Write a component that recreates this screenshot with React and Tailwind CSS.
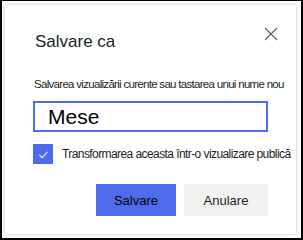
export default function App() {
  return (
    <div
      className="w-[303px] h-[240px] border-x-2 border-t border-b-2 border-black bg-white pt-[4px] pl-[3px] pr-[5px] pb-[4px]"
      style={{ fontFamily: '"Liberation Sans", Arial, sans-serif' }}
    >
      <div className="h-full bg-white shadow-[0_0_3px_rgba(0,0,0,0.25)] flex flex-col">
        <div className="flex items-start justify-between pl-[30px] pr-[18px]">
          <h2 className="mt-[27px] text-[17px] leading-[20px] text-[#201f1e]">Salvare ca</h2>
          <button className="mt-[22px] w-[14px] h-[14px] text-[#605e5c]">
            <svg viewBox="0 0 14 14" width="14" height="14" fill="none" stroke="currentColor" strokeWidth="1.1">
              <path d="M1 1L13 13M13 1L1 13" />
            </svg>
          </button>
        </div>

        <div className="px-[28px]">
          <p className="mt-[24px] pl-[1px] text-[11.5px] leading-[16px] tracking-[-0.7px] text-[#201f1e] whitespace-nowrap">
            Salvarea vizualizării curente sau tastarea unui nume nou
          </p>
          <div className="mt-[9px] h-[31px] border-2 border-[#4f6bed] flex items-center pl-[13px]">
            <span className="text-[21px] leading-none text-black">Mese</span>
          </div>
          <label className="mt-[12px] flex items-center gap-[9px]">
            <span className="shrink-0 w-[20px] h-[20px] bg-[#4f6bed] flex items-center justify-center">
              <svg viewBox="0 0 12 12" width="11" height="11" fill="none" stroke="white" strokeWidth="1.1">
                <path d="M1.5 6.5L4.5 9.5L10.5 3" />
              </svg>
            </span>
            <span className="text-[12px] leading-[16px] tracking-[-0.58px] text-[#201f1e] whitespace-nowrap">
              Transformarea aceasta într-o vizualizare publică
            </span>
          </label>

          <div className="mt-[20px] flex justify-end gap-[8px]">
            <button className="w-[80px] h-[32px] bg-[#4f6bed]">
              <span className="text-[13px] text-black">Salvare</span>
            </button>
            <button className="w-[84px] h-[32px] bg-[#f3f2f1]">
              <span className="text-[13px] text-[#201f1e]">Anulare</span>
            </button>
          </div>
        </div>
      </div>
    </div>
  );
}
